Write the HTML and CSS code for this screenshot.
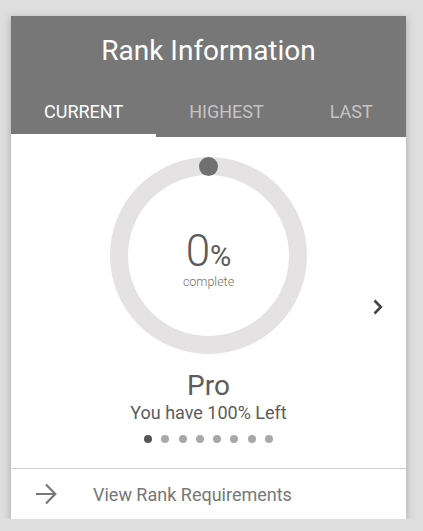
FILE: index.html
```html
<!DOCTYPE html>
<html lang="en">
<head>
  <meta charset="UTF-8">
  <meta name="viewport" content="width=device-width, initial-scale=1.0">
  <title>Rank Information</title>
  <link rel="stylesheet" href="styles.css">
</head>
<body>
  <div class="rank-card">
    <div class="rank-header">
      <h1 class="rank-title">Rank Information</h1>
      <div class="tabs">
        <div class="tab active">Current</div>
        <div class="tab">Highest</div>
        <div class="tab">Last</div>
      </div>
    </div>

    <div class="slide">
      <div class="progress">
        <svg class="ring" width="197" height="197" viewBox="0 0 197 197">
          <circle cx="98.5" cy="98.5" r="89.5" fill="none" stroke="#e4e2e2" stroke-width="18"/>
          <circle cx="98.5" cy="9.5" r="9.5" fill="#707070"/>
        </svg>
        <div class="progress-label">
          <div class="percent">0<span class="percent-sign">%</span></div>
          <div class="complete">complete</div>
        </div>
      </div>

      <div class="rank-name">Pro</div>
      <div class="rank-left">You have 100% Left</div>

      <div class="dots">
        <span class="dot active"></span>
        <span class="dot"></span>
        <span class="dot"></span>
        <span class="dot"></span>
        <span class="dot"></span>
        <span class="dot"></span>
        <span class="dot"></span>
        <span class="dot"></span>
      </div>

      <!-- next slide -->
      <svg class="next" width="12" height="18" viewBox="0 0 12 18">
        <path d="M2.5 2.5 L8.8 9 L2.5 15.5" fill="none" stroke="#444" stroke-width="2.6"/>
      </svg>
    </div>

    <a class="requirements" href="#">
      <svg class="arrow" width="22" height="22" viewBox="0 0 22 22">
        <path d="M1 11 H20 M11 1.5 L20.3 11 L11 20.5" fill="none" stroke="#777" stroke-width="2.2"/>
      </svg>
      <span>View Rank Requirements</span>
    </a>
  </div>
</body>
</html>
```

FILE: styles.css
```css
* {
  margin: 0;
  padding: 0;
  box-sizing: border-box;
}

body {
  background: #dedede;
  font-family: Roboto, "Liberation Sans", Arial, sans-serif;
  padding: 16px 17px 0 11px;
}

.rank-card {
  width: 395px;
  background: white;
  overflow: hidden;
  box-shadow: 0 2px 8px rgba(0, 0, 0, 0.25);
}

.rank-header {
  background: #777;
  color: white;
}

.rank-title {
  font-size: 28px;
  font-weight: 400;
  line-height: 34px;
  text-align: center;
  padding: 18px 0 21px;
}

.tabs {
  display: flex;
  white-space: nowrap;
}

.tab {
  flex: none;
  padding: 0 33px;
  font-size: 18px;
  line-height: 45px;
  text-transform: uppercase;
  color: #c4c4c4;
  border-bottom: 3px solid transparent;
}

.tab.active {
  color: white;
  border-bottom-color: white;
}

/* Slide */
.slide {
  position: relative;
  display: flex;
  flex-direction: column;
  align-items: center;
  padding: 20px 0 25px;
  border-bottom: 1px solid #d0d0d0;
}

.progress {
  position: relative;
  width: 197px;
  height: 197px;
  margin-bottom: 16px;
}

.ring {
  display: block;
}

.progress-label {
  position: absolute;
  inset: 0;
  display: flex;
  flex-direction: column;
  align-items: center;
  justify-content: center;
  color: #5a5a5a;
}

.percent {
  font-size: 44px;
  font-weight: 300;
  line-height: 44px;
  margin-top: 8px;
}

.percent-sign {
  font-size: 29px;
  font-weight: 400;
}

.complete {
  font-size: 12.5px;
  font-weight: 300;
  color: #707070;
  line-height: 16px;
  margin-top: -4px;
}

.rank-name {
  font-size: 28px;
  line-height: 32px;
  color: #5c5c5c;
}

.rank-left {
  font-size: 18px;
  line-height: 22px;
  color: #5c5c5c;
}

.dots {
  display: flex;
  gap: 9.3px;
  margin-top: 11px;
}

.dot {
  width: 8px;
  height: 8px;
  border-radius: 50%;
  background: #a8a8a8;
}

.dot.active {
  background: #555;
}

.next {
  position: absolute;
  right: 22px;
  top: 50%;
  margin-top: -5px;
}

/* Footer link */
.requirements {
  display: flex;
  align-items: center;
  height: 50px;
  padding-left: 24px;
  color: #777;
  font-size: 18px;
  text-decoration: none;
}

.arrow {
  margin-right: 36px;
}
```
